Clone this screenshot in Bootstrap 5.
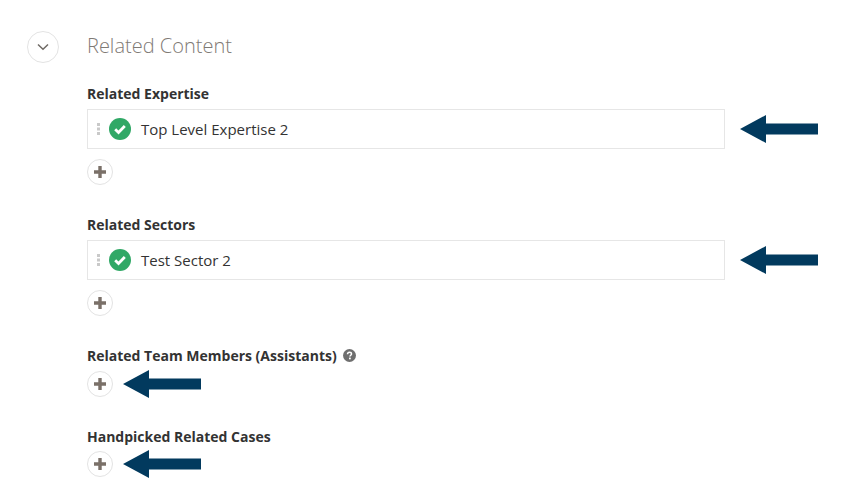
<!DOCTYPE html>
<html lang="en">
<head>
    <meta charset="UTF-8">
    <meta name="viewport" content="width=device-width, initial-scale=1.0">
    <title>Related Content</title>
    <link href="https://cdn.jsdelivr.net/npm/bootstrap@5.3.2/dist/css/bootstrap.min.css" rel="stylesheet">
    <script src="https://cdn.jsdelivr.net/npm/bootstrap@5.3.2/dist/js/bootstrap.bundle.min.js"></script>
    <style>
        body {
            font-family: "Open Sans", sans-serif;
            color: #333;
            background: #fff;
            overflow: hidden;
        }
        .page-wrap {
            height: 501px;
            padding: 28px 0 0 27px;
        }
        .toggle-btn {
            width: 32px;
            height: 32px;
            margin-top: 3px;
            border: 1px solid #e3e3e3;
            border-radius: 50%;
            background: #fff;
            flex: none;
        }
        .content-col {
            margin-left: 28px;
            width: 638px;
        }
        .section-title {
            font-size: 20px;
            line-height: 36px;
            font-weight: 300;
            color: #7f7a75;
            margin: 0 0 20px;
        }
        .field-label {
            font-size: 14px;
            line-height: 20px;
            font-weight: 700;
            color: #333;
            margin: 0 0 5px;
        }
        .item-row {
            height: 40px;
            border: 1px solid #e6e6e6;
            padding-left: 9px;
            font-size: 15px;
            color: #333;
        }
        .drag-dots {
            width: 3px;
            margin-right: 9px;
        }
        .check-icon {
            margin-right: 10px;
        }
        .add-btn {
            width: 26px;
            height: 26px;
            border: 1px solid #e3e3e3;
            border-radius: 50%;
            background: #fff;
            flex: none;
        }
        .add-gap {
            margin-top: 10px;
        }
        .block-one {
            margin-bottom: 30px;
        }
        .block-two {
            margin-bottom: 30px;
        }
        .block-three {
            margin-bottom: 29px;
        }
        .tight-label {
            margin-bottom: 4px;
        }
        .last-label {
            margin-bottom: 3px;
        }
        .row-arrow {
            position: absolute;
            left: 653px;
            top: 6px;
        }
        .item-wrap {
            width: 638px;
        }
        .inline-arrow {
            margin-left: 10px;
        }
        .help-icon {
            margin-left: 3px;
            margin-top: 3px;
            vertical-align: top;
        }
    </style>
</head>
<body>
    <svg width="0" height="0" class="d-block position-absolute">
        <symbol id="arrow" viewBox="0 0 78 28"><path d="M0 14 26 0V8.500H78V19.500H26V28Z" fill="#023a5e"/></symbol>
        <symbol id="plus" viewBox="0 0 12 12"><path d="M4.300 0h3.400v4.300H12v3.400H7.700V12H4.300V7.700H0V4.300h4.300Z" fill="#7a7068"/></symbol>
        <symbol id="check" viewBox="0 0 22 22"><circle cx="11" cy="11" r="11" fill="#30a866"/><path d="M6.200 11.300 9.500 14.500 15.800 8" fill="none" stroke="#fff" stroke-width="2.800"/></symbol>
        <symbol id="dots" viewBox="0 0 3 12"><path d="M0 0h3v3H0ZM0 4.500h3v3H0ZM0 9h3v3H0Z" fill="#c9c9c9"/></symbol>
    </svg>

    <div class="page-wrap d-flex align-items-start">
        <button type="button" class="toggle-btn p-0 d-flex align-items-center justify-content-center" aria-label="Collapse">
            <svg width="12" height="8" viewBox="0 0 12 8"><path d="M1 1.500 6 6.200 11 1.500" fill="none" stroke="#6f6a65" stroke-width="1.500"/></svg>
        </button>
        <div class="content-col">
            <h2 class="section-title">Related Content</h2>

            <div class="block-one">
                <div class="field-label">Related Expertise</div>
                <div class="position-relative item-wrap">
                    <div class="item-row d-flex align-items-center">
                        <svg class="drag-dots" width="3" height="12"><use href="#dots"/></svg>
                        <svg class="check-icon" width="22" height="22"><use href="#check"/></svg>
                        <span>Top Level Expertise 2</span>
                    </div>
                    <svg class="row-arrow" width="78" height="28"><use href="#arrow"/></svg>
                </div>
                <button type="button" class="add-btn add-gap p-0 d-flex align-items-center justify-content-center" aria-label="Add">
                    <svg width="12" height="12"><use href="#plus"/></svg>
                </button>
            </div>

            <div class="block-two">
                <div class="field-label">Related Sectors</div>
                <div class="position-relative item-wrap">
                    <div class="item-row d-flex align-items-center">
                        <svg class="drag-dots" width="3" height="12"><use href="#dots"/></svg>
                        <svg class="check-icon" width="22" height="22"><use href="#check"/></svg>
                        <span>Test Sector 2</span>
                    </div>
                    <svg class="row-arrow" width="78" height="28"><use href="#arrow"/></svg>
                </div>
                <button type="button" class="add-btn add-gap p-0 d-flex align-items-center justify-content-center" aria-label="Add">
                    <svg width="12" height="12"><use href="#plus"/></svg>
                </button>
            </div>

            <div class="block-three">
                <div class="field-label tight-label">Related Team Members (Assistants)
                    <svg class="help-icon" width="13" height="13" viewBox="0 0 13 13"><circle cx="6.500" cy="6.500" r="6.500" fill="#6f6f6f"/><path d="M4.500 5.200C4.600 3.900 5.400 3.300 6.500 3.300 7.700 3.300 8.500 4 8.500 5 8.500 6.200 6.900 6.300 6.900 7.500" fill="none" stroke="#fff" stroke-width="1.500"/><rect x="6" y="8.600" width="1.800" height="1.700" fill="#fff"/></svg>
                </div>
                <div class="d-flex align-items-center">
                    <button type="button" class="add-btn p-0 d-flex align-items-center justify-content-center" aria-label="Add">
                        <svg width="12" height="12"><use href="#plus"/></svg>
                    </button>
                    <svg class="inline-arrow" width="78" height="28"><use href="#arrow"/></svg>
                </div>
            </div>

            <div>
                <div class="field-label last-label">Handpicked Related Cases</div>
                <div class="d-flex align-items-center">
                    <button type="button" class="add-btn p-0 d-flex align-items-center justify-content-center" aria-label="Add">
                        <svg width="12" height="12"><use href="#plus"/></svg>
                    </button>
                    <svg class="inline-arrow" width="78" height="28"><use href="#arrow"/></svg>
                </div>
            </div>
        </div>
    </div>
</body>
</html>
